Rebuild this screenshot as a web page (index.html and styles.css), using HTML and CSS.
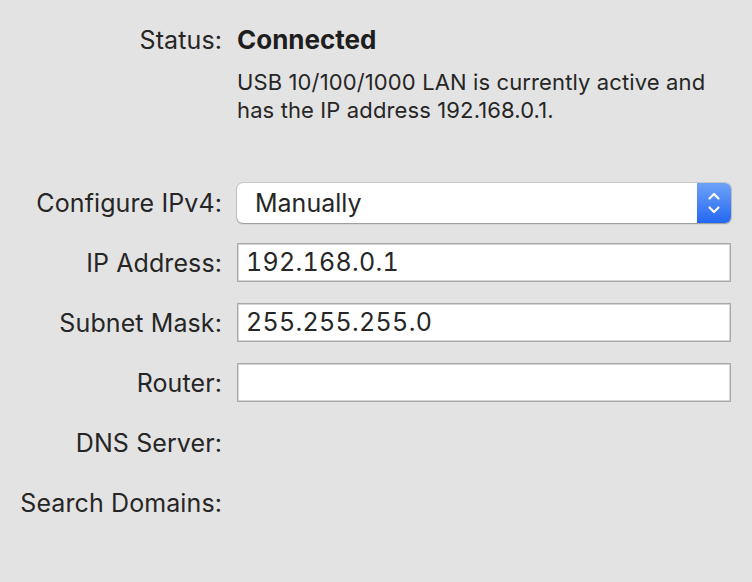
FILE: index.html
```html
<!DOCTYPE html>
<html>
<head>
<meta charset="utf-8">
<link rel="stylesheet" href="styles.css">
</head>
<body>
<div class="panel">
  <div class="grid status">
    <div class="label">Status:</div>
    <div class="value strong">Connected</div>
  </div>
  <div class="grid desc-row">
    <div></div>
    <div class="desc">USB 10/100/1000 LAN is currently active and has the IP address 192.168.0.1.</div>
  </div>
  <div class="grid form">
    <div class="label">Configure IPv4:</div>
    <div class="popup">
      <span class="popup-text">Manually</span>
      <span class="stepper">
        <svg width="16" height="26" viewBox="0 0 16 26"><path d="M3.5 8.5 L8 4 L12.5 8.5" fill="none" stroke="#fff" stroke-width="2.2" stroke-linecap="round" stroke-linejoin="round"/><path d="M3.5 17.5 L8 22 L12.5 17.5" fill="none" stroke="#fff" stroke-width="2.2" stroke-linecap="round" stroke-linejoin="round"/></svg>
      </span>
    </div>
    <div class="label">IP Address:</div>
    <div class="field">192.168.0.1</div>
    <div class="label">Subnet Mask:</div>
    <div class="field">255.255.255.0</div>
    <div class="label">Router:</div>
    <div class="field"></div>
    <div class="label">DNS Server:</div>
    <div class="empty"></div>
    <div class="label">Search Domains:</div>
    <div class="empty"></div>
  </div>
</div>
</body>
</html>
```
FILE: styles.css
```css
html, body {
  margin: 0;
  padding: 0;
  background: #e3e3e3;
}
body {
  font-family: Inter, "Noto Sans", "Liberation Sans", sans-serif;
  color: #262626;
  width: 752px;
  height: 582px;
  overflow: hidden;
}
.panel {
  padding-top: 26px;
}
.grid {
  display: grid;
  grid-template-columns: 222px 494px;
  column-gap: 15px;
}
.label {
  text-align: right;
  font-size: 25px;
  line-height: 40px;
  height: 40px;
  white-space: nowrap;
  letter-spacing: 0.1px;
}
.status .label,
.status .value {
  line-height: 28px;
  height: 28px;
}
.strong {
  font-weight: 700;
  font-size: 26px;
  color: #1e1e1e;
}
.desc-row {
  margin-top: 14px;
}
.desc {
  font-size: 22px;
  line-height: 28px;
  letter-spacing: 0.12px;
}
.form {
  margin-top: 59px;
  row-gap: 20px;
}
.popup {
  box-sizing: border-box;
  height: 40px;
  display: flex;
  align-items: center;
  background: #fff;
  border-radius: 6px;
  box-shadow: 0 0 0 1px rgba(0,0,0,0.12), 0 1px 1.5px rgba(0,0,0,0.25);
  overflow: hidden;
}
.popup-text {
  flex: 1;
  padding-left: 18px;
  font-size: 25px;
}
.stepper {
  width: 34px;
  height: 40px;
  display: flex;
  align-items: center;
  justify-content: center;
  background: linear-gradient(#6ea2f7, #2468f3);
}
.field {
  box-sizing: border-box;
  height: 39px;
  background: #fff;
  border: 1px solid #a9a9a9;
  box-shadow: inset 0 0 0 1px #d4d4d4;
  padding-left: 8px;
  font-size: 25px;
  line-height: 37px;
  font-variant-numeric: tabular-nums;
  letter-spacing: 0.3px;
}
.empty {
  height: 40px;
}
```
